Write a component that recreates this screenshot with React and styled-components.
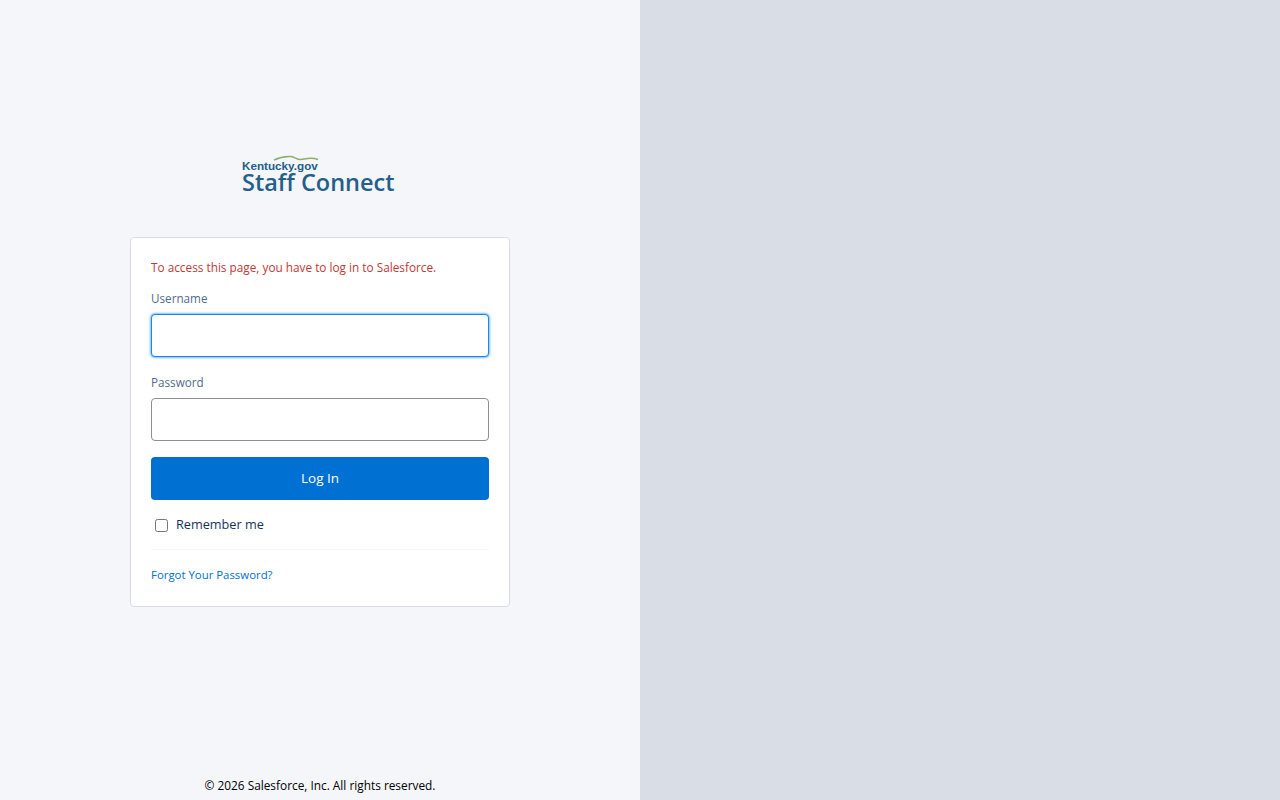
import React from 'react';
import styled, { createGlobalStyle } from 'styled-components';

const GlobalStyle = createGlobalStyle`
  html, body {
    margin: 0;
    padding: 0;
    height: 100%;
  }
  body {
    font-family: "Open Sans", Lato, sans-serif;
    color: #16325c;
  }
`;

const Page = styled.div`
  display: flex;
  width: 100%;
  height: 100vh;
  overflow: hidden;
`;

const LeftPanel = styled.main`
  display: flex;
  flex-direction: column;
  align-items: center;
  width: 50%;
  padding-top: 155px;
  box-sizing: border-box;
  background: #f4f6f9;
`;

const RightPanel = styled.aside`
  width: 50%;
  background: #d8dde6;
`;

const Logo = styled.div`
  display: flex;
  flex-direction: column;
  width: 154px;
  height: 37px;
  margin: 0 2px 45px 0;
  color: #23608a;
`;

const LogoTop = styled.div`
  display: flex;
  height: 17px;
  align-items: flex-end;
  position: relative;
`;

const LogoSmall = styled.span`
  font-family: "Liberation Sans", sans-serif;
  font-size: 11.7px;
  font-weight: 700;
  line-height: 12px;
`;

const Swoosh = styled.svg`
  position: absolute;
  left: 31px;
  top: 0;
`;

const LogoBig = styled.span`
  font-family: "Open Sans", sans-serif;
  font-size: 23.500px;
  font-weight: 600;
  line-height: 20px;
  white-space: nowrap;
`;

const Card = styled.form`
  width: 380px;
  height: 370px;
  padding: 20px;
  box-sizing: border-box;
  background: #fff;
  border: 1px solid #d8dde6;
  border-radius: 4px;
`;

const ErrorText = styled.div`
  height: 18px;
  margin-bottom: 13px;
  font-size: 11.8px;
  line-height: 18px;
  color: #c23934;
`;

const Label = styled.label`
  display: block;
  height: 18px;
  margin-bottom: 7px;
  font-size: 11.7px;
  line-height: 18px;
  color: #54698d;
`;

const Input = styled.input`
  display: block;
  width: 100%;
  height: 43px;
  margin-bottom: 16px;
  padding: 12px;
  box-sizing: border-box;
  background: #fff;
  border: 1px solid ${p => (p.$focused ? '#1589ee' : '#8e8e8e')};
  border-radius: 4px;
  box-shadow: ${p => (p.$focused ? '0 0 3px #0070d2' : 'none')};
  outline: none;
  font-size: 14px;
`;

const LoginButton = styled.button`
  display: block;
  width: 100%;
  height: 43px;
  padding: 0 0 1px;
  background: #0070d2;
  border: 0;
  border-radius: 4px;
  color: #fff;
  font-family: inherit;
  font-size: 13.500px;
`;

const RememberRow = styled.label`
  display: flex;
  align-items: center;
  height: 18px;
  margin: 15px 0 16px 4px;
  font-size: 12.700px;
  color: #16325c;
`;

const Check = styled.input`
  width: 13px;
  height: 13px;
  margin: 2px 8px 0 0;
`;

const Divider = styled.div`
  height: 1px;
  margin-bottom: 16px;
  background: #f4f6f9;
`;

const ForgotLink = styled.a`
  display: block;
  height: 18px;
  font-size: 11.400px;
  line-height: 18px;
  color: #0070d2;
  text-decoration: none;
`;

const Footer = styled.footer`
  margin-top: auto;
  padding-bottom: 6px;
  font-size: 11.850px;
  line-height: 18px;
  color: #000;
`;

export default function App() {
  return (
    <>
      <GlobalStyle />
      <Page>
        <LeftPanel>
          <Logo>
            <LogoTop>
              <LogoSmall>Kentucky.gov</LogoSmall>
              <Swoosh width="46" height="7" viewBox="0 0 46 7">
                <path d="M1 5C6 2.500 12 1 18 1.500C22 1.800 24 5 28 4.500C33 3.800 38 1.800 45 4.500" fill="none" stroke="#8fae6c" strokeWidth="1.500" />
              </Swoosh>
            </LogoTop>
            <LogoBig>Staff Connect</LogoBig>
          </Logo>
          <Card onSubmit={e => e.preventDefault()}>
            <ErrorText>To access this page, you have to log in to Salesforce.</ErrorText>
            <Label htmlFor="username">Username</Label>
            <Input id="username" type="text" $focused />
            <Label htmlFor="password">Password</Label>
            <Input id="password" type="password" />
            <LoginButton type="submit">Log In</LoginButton>
            <RememberRow>
              <Check type="checkbox" />
              Remember me
            </RememberRow>
            <Divider />
            <ForgotLink href="#">Forgot Your Password?</ForgotLink>
          </Card>
          <Footer>© 2026 Salesforce, Inc. All rights reserved.</Footer>
        </LeftPanel>
        <RightPanel />
      </Page>
    </>
  );
}
